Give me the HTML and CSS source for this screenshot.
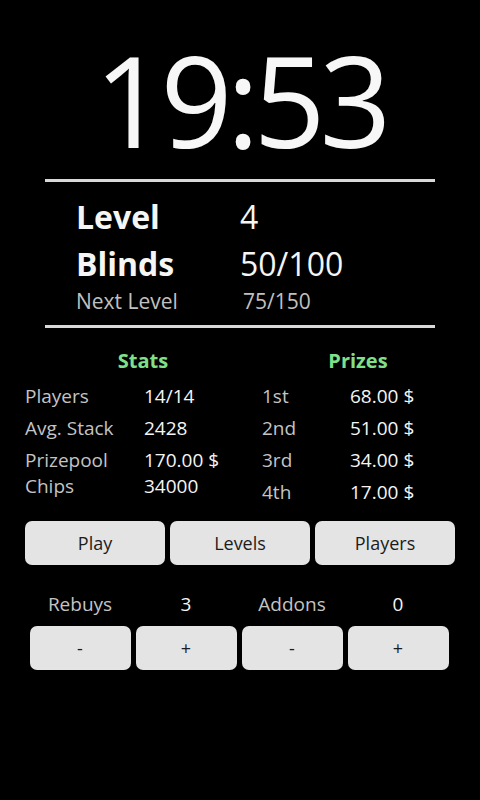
FILE: index.html
```html
<!DOCTYPE html>
<html lang="en">
<head>
  <meta charset="UTF-8">
  <meta name="viewport" content="width=device-width, initial-scale=1.0">
  <title>Tournament Clock</title>
  <link rel="stylesheet" href="styles.css">
</head>
<body>
  <!-- Countdown -->
  <div class="clock">19:53</div>
  <div class="rule"></div>

  <!-- Current level -->
  <div class="level-info">
    <div class="level-row big">
      <span class="level-label">Level</span>
      <span class="level-value">4</span>
    </div>
    <div class="level-row big">
      <span class="level-label">Blinds</span>
      <span class="level-value">50/100</span>
    </div>
    <div class="level-row small">
      <span class="level-label">Next Level</span>
      <span class="level-value next">75/150</span>
    </div>
  </div>
  <div class="rule rule-bottom"></div>

  <!-- Stats and prizes -->
  <div class="tables">
    <div class="table stats">
      <h2>Stats</h2>
      <div class="row"><span class="key">Players</span><span class="val">14/14</span></div>
      <div class="row"><span class="key">Avg. Stack</span><span class="val">2428</span></div>
      <div class="row"><span class="key">Prizepool<br>Chips</span><span class="val">170.00 $<br>34000</span></div>
    </div>
    <div class="table prizes">
      <h2>Prizes</h2>
      <div class="row"><span class="key">1st</span><span class="val">68.00 $</span></div>
      <div class="row"><span class="key">2nd</span><span class="val">51.00 $</span></div>
      <div class="row"><span class="key">3rd</span><span class="val">34.00 $</span></div>
      <div class="row"><span class="key">4th</span><span class="val">17.00 $</span></div>
    </div>
  </div>

  <!-- Navigation -->
  <div class="nav-buttons">
    <button>Play</button>
    <button>Levels</button>
    <button>Players</button>
  </div>

  <!-- Rebuys / addons -->
  <div class="counters">
    <div class="cell"><span class="c-label">Rebuys</span><button>-</button></div>
    <div class="cell"><span class="c-value">3</span><button>+</button></div>
    <div class="cell"><span class="c-label">Addons</span><button>-</button></div>
    <div class="cell"><span class="c-value">0</span><button>+</button></div>
  </div>
</body>
</html>
```

FILE: styles.css
```css
* {
  margin: 0;
  padding: 0;
  box-sizing: border-box;
}

body {
  background-color: #000;
  color: #f5f5f5;
  font-family: "Open Sans", "DejaVu Sans", sans-serif;
  width: 480px;
  min-height: 800px;
}

/* Clock */
.clock {
  padding-top: 36px;
  font-size: 126px;
  line-height: 126px;
  letter-spacing: -6px;
  text-align: center;
  color: #f7f7f7;
}

.rule {
  margin: 17px 45px 0;
  height: 3px;
  background-color: #d9d9d9;
}

.rule-bottom {
  margin-top: 10px;
}

/* Level section */
.level-info {
  padding: 11px 0 0 76px;
}

.level-row {
  display: flex;
}

.level-label {
  width: 164px;
}

.level-row.big {
  font-size: 32px;
  line-height: 47px;
}

.level-row.big .level-label {
  font-weight: bold;
  color: #f5f5f5;
}

.level-row.small {
  font-size: 21px;
  line-height: 28px;
  color: #c0c0c0;
}

.level-value.next {
  padding-left: 3px;
}

/* Stats & prizes */
.tables {
  display: flex;
  padding: 19px 0 0 25px;
}

.table h2 {
  font-size: 20px;
  line-height: 28px;
  font-weight: bold;
  text-align: center;
  color: #80e08a;
  margin-bottom: 5px;
}

.stats {
  width: 236px;
}

.prizes {
  width: 194px;
}

.row {
  display: flex;
  padding: 3px 0;
  font-size: 19px;
  line-height: 26px;
}

.key {
  color: #c4c4c4;
}

.val {
  color: #f5f5f5;
}

.stats .key {
  width: 119px;
}

.prizes .key {
  width: 89px;
  padding-left: 1px;
}

/* Buttons */
button {
  font-family: "Open Sans", "DejaVu Sans", sans-serif;
  background-color: #e4e4e4;
  color: #1c1c1c;
  border: none;
  border-radius: 7px;
  font-size: 18px;
  height: 44px;
  cursor: pointer;
}

.nav-buttons {
  display: flex;
  gap: 5px;
  margin: 13px 25px 0;
}

.nav-buttons button {
  flex: 1;
}

.counters {
  display: grid;
  grid-template-columns: repeat(4, 106px);
  margin: 26px 0 0 27px;
}

.cell {
  display: flex;
  flex-direction: column;
  align-items: center;
}

.c-label,
.c-value {
  font-size: 19px;
  line-height: 26px;
}

.c-label {
  color: #c4c4c4;
}

.c-value {
  color: #f5f5f5;
}

.cell button {
  width: 101px;
  margin-top: 9px;
  height: 44px;
}
```
